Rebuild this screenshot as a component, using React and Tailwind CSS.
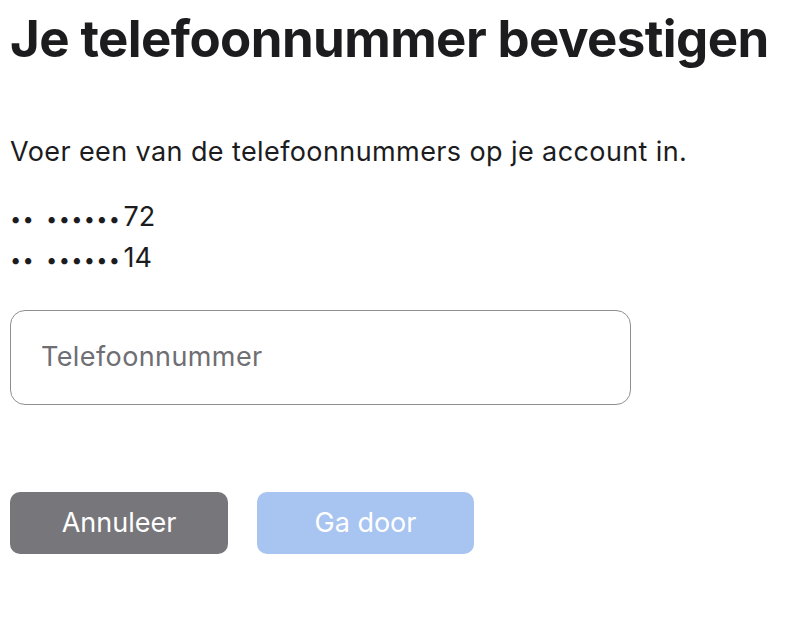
function MaskedNumber({ last }) {
  return (
    <div>
      <span className="text-[20px] leading-[0] tracking-[1.3px]">••</span>
      <span className="ml-[11px] text-[20px] leading-[0] tracking-[1.3px]">••••••</span>
      <span className="ml-[2px]">{last}</span>
    </div>
  );
}

export default function App() {
  return (
    <div className="min-h-[626px] w-[800px] bg-white px-[10px] pt-[9px] font-['Inter','Noto_Sans',sans-serif] text-[#1c1c1e]">
      <h1 className="text-[51px] font-bold leading-[60px] tracking-[-0.6px]">Je telefoonnummer bevestigen</h1>

      <p className="mt-[67px] text-[27px] leading-[32px] tracking-[0.4px]">
        Voer een van de telefoonnummers op je account in.
      </p>

      <div className="mt-[28px] text-[27px] leading-[41px]">
        <MaskedNumber last="72" />
        <MaskedNumber last="14" />
      </div>

      <div className="mt-[32px] flex h-[95px] w-[621px] items-center rounded-[15px] border border-[#8e8e93] px-[30px]">
        <input
          type="tel"
          placeholder="Telefoonnummer"
          className="w-full bg-transparent text-[27px] tracking-[0.4px] text-[#1c1c1e] outline-none placeholder:text-[#6e6e73]"
        />
      </div>

      <div className="mt-[87px] flex gap-[29px]">
        <button className="h-[62px] w-[218px] rounded-[10px] bg-[#77767b] text-[27px] text-white">Annuleer</button>
        <button disabled className="h-[62px] w-[217px] rounded-[10px] bg-[#a8c4f0] text-[27px] text-white">
          Ga door
        </button>
      </div>
    </div>
  );
}
